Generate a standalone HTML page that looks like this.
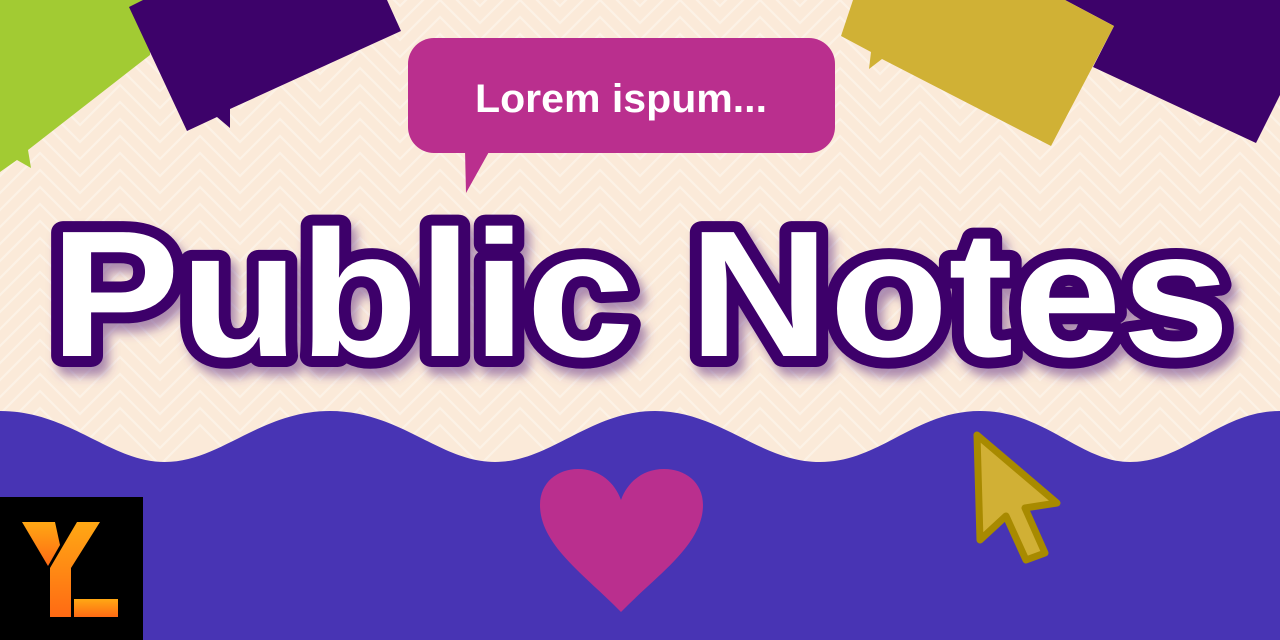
<!DOCTYPE html>
<html><head><meta charset="utf-8"><style>
html,body{margin:0;padding:0;width:1280px;height:640px;overflow:hidden;background:#fbead9}
svg{display:block}
</style></head><body>
<svg width="1280" height="640" viewBox="0 0 1280 640" xmlns="http://www.w3.org/2000/svg">
<defs>
<linearGradient id="og" x1="0" y1="0" x2="0" y2="1">
<stop offset="0" stop-color="#ffa814"/><stop offset="1" stop-color="#ff6a14"/>
</linearGradient>
<filter id="sh" x="-10%" y="-20%" width="120%" height="150%">
<feDropShadow dx="6" dy="9" stdDeviation="5" flood-color="#6a3b8a" flood-opacity="0.55"/>
</filter>
</defs>
<rect width="1280" height="640" fill="#fbead9"/>
<g stroke="#fdf3e8" stroke-width="2.2" fill="none" opacity="0.9">
<path id="zl" d="M-40 0 L0 40 L40 0 L80 40 L120 0 L160 40 L200 0 L240 40 L280 0 L320 40 L360 0 L400 40 L440 0 L480 40 L520 0 L560 40 L600 0 L640 40 L680 0 L720 40 L760 0 L800 40 L840 0 L880 40 L920 0 L960 40 L1000 0 L1040 40 L1080 0 L1120 40 L1160 0 L1200 40 L1240 0 L1280 40 L1320 0"/>
<use href="#zl" y="-34"/><use href="#zl" y="-17"/><use href="#zl" y="17"/><use href="#zl" y="34"/><use href="#zl" y="51"/><use href="#zl" y="68"/><use href="#zl" y="85"/><use href="#zl" y="102"/><use href="#zl" y="119"/><use href="#zl" y="136"/><use href="#zl" y="153"/><use href="#zl" y="170"/><use href="#zl" y="187"/><use href="#zl" y="204"/><use href="#zl" y="221"/><use href="#zl" y="238"/><use href="#zl" y="255"/><use href="#zl" y="272"/><use href="#zl" y="289"/><use href="#zl" y="306"/><use href="#zl" y="323"/><use href="#zl" y="340"/><use href="#zl" y="357"/><use href="#zl" y="374"/><use href="#zl" y="391"/><use href="#zl" y="408"/><use href="#zl" y="425"/>
</g>
<polygon points="0,0 150,0 150,55 28,150 31,168 17,160 0,172" fill="#a2cb33"/>
<polygon points="129,7 143,0 387,0 401,31 230,109 230,128 217,117 187,131" fill="#3d026a"/>
<polygon points="1065,0 1280,0 1280,95 1256,143 1093,67 1114,26" fill="#3d026a"/>
<polygon points="841,36 853,0 1065,0 1114,26 1051,146 882,59 869,69 871,52" fill="#d0b135"/>
<rect x="408" y="38" width="427" height="115" rx="26" fill="#ba2f8e"/>
<polygon points="465,150 490,150 466,193" fill="#ba2f8e"/>
<text x="621" y="112" text-anchor="middle" font-family="Liberation Sans, sans-serif" font-weight="bold" font-size="40" textLength="292" lengthAdjust="spacingAndGlyphs" fill="#fff">Lorem ispum...</text>
<g filter="url(#sh)">
<text x="640" y="356" text-anchor="middle" font-family="Liberation Sans, sans-serif" font-weight="bold" font-size="180" textLength="1180" lengthAdjust="spacingAndGlyphs" fill="#fff" stroke="#3d026a" stroke-width="22" stroke-linejoin="round" paint-order="stroke">Public Notes</text>
</g>
<path d="M0 411 C70 411 110 462 165 462 C220 462 260 411 330 411 C400 411 440 462 495 462 C550 462 590 411 655 411 C720 411 760 462 820 462 C880 462 915 411 980 411 C1045 411 1080 462 1130 462 C1185 462 1220 411 1280 411 L1280 640 L0 640 Z" fill="#4834b4"/>
<path d="M621 612 C585 575 540 545 540 505 C540 482 558 469 578 469 C600 469 615 483 621 500 C627 483 642 469 664 469 C685 469 703 482 703 505 C703 545 657 575 621 612 Z" fill="#ba2f8e"/>
<polygon points="977,435 980,540 1006,516 1026,560 1045,553 1025,508 1057,503" fill="#d1b035" stroke="#a88a00" stroke-width="7" stroke-linejoin="round"/>
<rect x="0" y="497" width="143" height="143" fill="#000"/>
<polygon points="22,522 55,522 60,545 48,566" fill="url(#og)"/>
<polygon points="77,522 100,522 71,568 71,617 50,617 50,568" fill="url(#og)"/>
<rect x="74" y="599" width="44" height="18" fill="url(#og)"/>
</svg>
</body></html>
